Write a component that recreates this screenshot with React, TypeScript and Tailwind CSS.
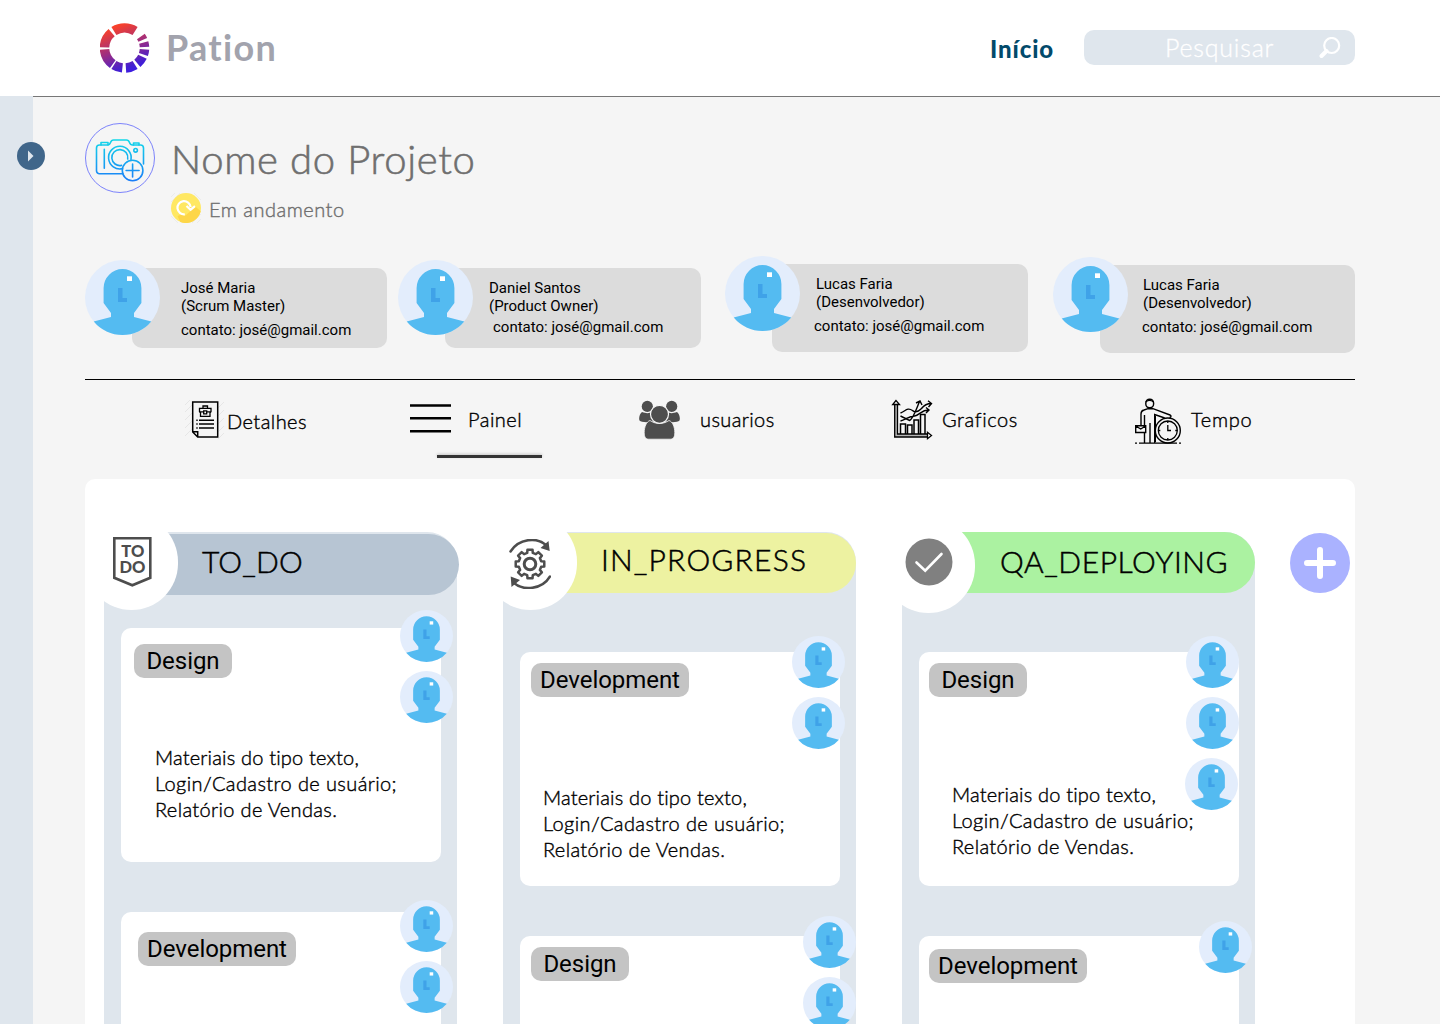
import React from "react";

const SANS = "font-['Lato',sans-serif]";
const ROBOTO = "font-['Roboto',sans-serif]";

function Avatar({ className }: { className: string }) {
  return (
    <svg viewBox="0 0 75 75" preserveAspectRatio="none" className={className}>
      <circle cx="37.5" cy="37.5" r="37.5" fill="#e3edfc" />
      <path
        d="M18.6 28a18.9 18.9 0 0 1 37.8 0V43L49 53v4l17.3 4.5a37.5 37.5 0 0 1-57.6 0L26 57v-4l-7.400-10z"
        fill="#54bbf1"
      />
      <path d="M33 28h4.500v10H42v4h-9z" fill="#3fa2e8" />
      <rect x="42" y="16.300" width="5" height="4.700" fill="#fff" />
    </svg>
  );
}

const ringSegments: [number, number][] = [
  [-122, -58], [182, 230], [126, 176], [96, 122], [58, 86], [26, 50], [4, 19], [-16, -3], [-35, -24],
];

function Logo() {
  const r = 20;
  const point = (deg: number) => {
    const a = (deg * Math.PI) / 180;
    return `${(24.5 + r * Math.cos(a)).toFixed(2)} ${(25 + r * Math.sin(a)).toFixed(2)}`;
  };
  return (
    <svg viewBox="0 0 50 50" className="ml-px size-[50px]">
      <defs>
        <linearGradient id="ring" gradientUnits="userSpaceOnUse" x1="14" y1="4" x2="31" y2="48">
          <stop offset="0" stopColor="#f8412b" />
          <stop offset="0.5" stopColor="#9b2c83" />
          <stop offset="0.9" stopColor="#431fd2" />
          <stop offset="1" stopColor="#3d1de0" />
        </linearGradient>
      </defs>
      {ringSegments.map(([a, b]) => (
        <path key={a} d={`M${point(a)}A${r} ${r} 0 0 1 ${point(b)}`} fill="none" stroke="url(#ring)" strokeWidth="9.500" />
      ))}
    </svg>
  );
}

function Camera() {
  return (
    <svg viewBox="0 0 70 70" className="size-[70px] shrink-0" fill="none">
      <defs>
        <linearGradient id="cam" gradientUnits="userSpaceOnUse" x1="35" y1="15" x2="35" y2="58">
          <stop offset="0" stopColor="#12dbe8" />
          <stop offset="1" stopColor="#1a7df8" />
        </linearGradient>
      </defs>
      <circle cx="35" cy="35" r="34.500" stroke="#7c83fb" />
      <g stroke="url(#cam)" strokeWidth="1.600" strokeLinejoin="round" strokeLinecap="round">
        <path d="M38 50.700H14.500a3 3 0 0 1-3-3V25a3 3 0 0 1 3-3h8c2 0 2.500-1 3-2.500.600-1.700 1-2.500 3-2.500h13c2 0 2.500 1 3 2.500s1 2.500 3 2.500h8a3 3 0 0 1 3 3v16" />
        <path d="M16 22v-2.500h7V22M48.500 22v-2h5.500v2M19.300 26.300v19" />
        <circle cx="50.600" cy="27.300" r="1.800" />
        <path d="M37.500 45.600A11.300 11.300 0 1 1 46 36.500" />
        <path d="M36.500 42.400A8 8 0 1 1 42.700 36" />
        <circle cx="47.600" cy="47.500" r="10.300" />
        <path d="M47.600 41v13M41.100 47.500h13" />
      </g>
    </svg>
  );
}

function Status() {
  return (
    <svg viewBox="0 0 30 30" className="size-[30px]">
      <path d="M0 4 4 0M0 9 9 0M21 30l9-9M26 30l4-4M0 23l7 7M23 0l7 7" stroke="#e9e9e9" strokeWidth=".8" />
      <circle cx="15" cy="15" r="15" fill="#ffe863" />
      <path d="m19 18.500 5-5.300 5.700 5A15 15 0 0 1 9.300 28.900L6.500 23l4-1.500 4 1z" fill="#fdd648" />
      <path d="M13.800 21.300A6.600 6.600 0 1 1 19.600 14" fill="none" stroke="#fff" strokeWidth="2.200" />
      <path d="m15.500 13 4.100 3.700 4.400-3.500" fill="none" stroke="#fff" strokeWidth="2.200" />
    </svg>
  );
}

function DetailsIcon() {
  return (
    <svg viewBox="0 0 40 40" className="h-10 w-10" fill="none" stroke="#000">
      <path d="M1 5l5-5M1 12l8-8M1 20l8-8M1 28l8-8M1 36l8-8M34 8l6-6M34 16l6-6M34 24l6-6M34 32l6-6M34 39l6-6" stroke="#e6e6e6" />
      <path d="M8.700 2h25v35h-20l-5-5zM9 31.800h4.700v5" fill="#f5f5f5" strokeWidth="1.500" />
      <path d="M15.500 8.300H27v3.500l-1 1v3.500h-9.500v-3.500l-1-1zM19 8.300V6h4.500v2.300M15.500 11.800h4M23 11.800h4M19.700 10.800h3v3h-3z" strokeWidth="1.300" />
      <path d="M15 20.300h15M15 24h15M15 28h15M12.300 20.300h1.400M12.300 24h1.400M12.300 28h1.400" strokeWidth="1.400" />
    </svg>
  );
}

function UsersIcon() {
  return (
    <svg viewBox="0 0 41 40" className="h-10 w-[41px]" fill="#4d4d4d">
      <circle cx="8.300" cy="6.400" r="5.600" />
      <circle cx="32.700" cy="6.400" r="5.600" />
      <path d="M3 12c4 1.500 6 1.300 8.500.6.500 4 2 6.500 4 8.400-3 1.200-13 2-15-.5-1-2 .2-7 2.500-8.500zM38 12c-4 1.500-6 1.300-8.500.6-.5 4-2 6.500-4 8.400 3 1.200 13 2 15-.5 1-2-.2-7-2.500-8.500z" />
      <path
        d="M11 20.500c6 4 13 4 19 0 3.500 1 5.800 6.500 5.800 12 0 4.500-1.500 6.700-4.500 6.700H9.700c-3 0-4.500-2.200-4.500-6.700 0-5.500 2.300-11 5.800-12z"
        stroke="#f5f5f5"
        strokeWidth=".8"
      />
      <circle cx="20.500" cy="14.300" r="9" stroke="#f5f5f5" strokeWidth="1.200" />
    </svg>
  );
}

function ChartIcon() {
  return (
    <svg viewBox="0 0 42 42" className="size-[42px]" fill="none" stroke="#000" strokeWidth="1.300">
      <path d="M3.700 5v33h33v-3H6.500V5" fill="#b5b5b5" />
      <path d="M5 1.500 1.700 5.500h6.800zM36.500 33.300v6.400l4-3.200z" fill="#fff" />
      <path d="M9.500 35V25h5v10M16.500 35v-9h4.500v9M23 35V21h4.500v14M29.500 35V15.500H34V35" strokeWidth="1.500" />
      <path d="M9.500 14c5-2 7-6 12-2.500 3 3 7 0 9-2 3-4 6-5 10-5M37 1.700l3.500 2.800L37.500 8M9.500 22c5-1 8-5 14-5 5-1 7-6 14-6M35 8.500l3 2.500-3 3M9.500 17l9 4.500c4-2 7-12 10-19M25 4l4-2 2 4" strokeWidth="1.400" />
    </svg>
  );
}

function TimeIcon() {
  return (
    <svg viewBox="0 0 46 46" className="size-[46px]" fill="none" stroke="#000" strokeWidth="1.400">
      <path d="M0 45.200h2M4 45.200h38M44 45.200h2" strokeWidth="1.200" />
      <rect x="10.800" y="1.200" width="7.800" height="8.600" rx="3.700" />
      <path d="M10.800 4C13 2 16 2 18.600 4" />
      <path d="M6 27V16c0-2.500 1-3.500 3-4l4-1.300h5l17 6.300c1.500.6 1.300 2.500-.5 2.500M9.500 17v10M9.500 35v10M19.700 45V16.500l10 3.500M15 25v20" />
      <path d="M20.500 18v26" strokeWidth="1" />
      <path d="M.7 27.700h10v6.800H.7zM.7 28l5 3 5-3" />
      <circle cx="32.800" cy="32.500" r="12.500" />
      <circle cx="32.800" cy="32.500" r="9.500" strokeWidth="1.300" />
      <path d="M32.800 27v5.500H36M32.800 23v2M32.800 40v2M23.300 32.500h2M40.300 32.500h2" strokeWidth="1.300" />
    </svg>
  );
}

function TodoIcon() {
  return (
    <svg viewBox="0 0 40 50" className="h-[50px] w-10">
      <path d="M1.300 1.300h36v39.500L19.300 48.300l-18-7.500z" fill="none" stroke="#4d4d4d" strokeWidth="2.600" />
      <g fill="#4d4d4d" fontFamily="Lato" fontWeight="900" fontSize="17">
        <text x="8.300" y="20.300" textLength="23" lengthAdjust="spacingAndGlyphs">TO</text>
        <text x="6.500" y="36" textLength="26" lengthAdjust="spacingAndGlyphs">DO</text>
      </g>
    </svg>
  );
}

const gearPath = (() => {
  const out: string[] = [];
  for (let i = 0; i < 8; i++) {
    for (const [offset, radius] of [[-14, 11.500], [-10, 14.500], [10, 14.500], [14, 11.500]]) {
      const a = ((i * 45 + offset) * Math.PI) / 180;
      out.push(`${(21 + radius * Math.cos(a)).toFixed(2)} ${(25 + radius * Math.sin(a)).toFixed(2)}`);
    }
  }
  return `M${out.join("L")}Z`;
})();

function ProgressIcon() {
  return (
    <svg viewBox="0 0 42 50" className="h-[50px] w-[42px]" fill="none" stroke="#4d4d4d" strokeWidth="2.500">
      <path d={gearPath} strokeLinejoin="round" />
      <circle cx="21" cy="25" r="5.800" strokeWidth="3" />
      <path d="M1.500 12.500C10-1 28-2 37 6M41 37.500C33 51 14 52 5 44" strokeLinecap="round" />
      <path d="m39.500 2 1.200 10-9.200-3zM2.500 48 1.700 37.500l9.300 3.500z" fill="#4d4d4d" stroke="none" />
    </svg>
  );
}

function CheckIcon() {
  return (
    <svg viewBox="0 0 48 48" className="size-12">
      <circle cx="24" cy="24" r="23.500" fill="#808080" />
      <path d="m11.500 24.500 8.700 8.200L36.500 16" fill="none" stroke="#fff" strokeWidth="2.600" strokeLinecap="round" />
    </svg>
  );
}

const members = [
  { name: "José Maria", role: "(Scrum Master)", box: "w-[302px]", card: "mt-2 h-20", text: "pl-[49px] pt-[11px]", contact: "mt-1.5" },
  { name: "Daniel Santos", role: "(Product Owner)", box: "ml-[11px] w-[303px]", card: "mt-2 h-20", text: "pl-11 pt-[11px]", contact: "mt-[3px] ml-1" },
  { name: "Lucas Faria", role: "(Desenvolvedor)", box: "ml-6 -mt-1 w-[303px]", card: "mt-2 h-[88px]", text: "pl-11 pt-[11px]", contact: "mt-1.5 -ml-0.5" },
  { name: "Lucas Faria", role: "(Desenvolvedor)", box: "ml-[25px] -mt-[3px] w-[302px]", card: "mt-2 h-[88px]", text: "pl-[43px] pt-[11px]", contact: "mt-1.5 -ml-px" },
];

const tabs = [
  { label: "Detalhes", icon: <DetailsIcon />, at: "ml-[99px] w-[226px] pt-5", text: "ml-[3px] pt-2 tracking-[0.45px]" },
  {
    label: "Painel",
    icon: (
      <svg viewBox="0 0 41 30" className="mt-1 h-[30px] w-[41px]">
        <path d="M0 1.500h41M0 14.300h41M0 27.300h41" stroke="#000" strokeWidth="2.500" />
      </svg>
    ),
    at: "w-[229px] pt-5",
    text: "ml-[17px] pt-1.5 tracking-[0.5px]",
  },
  { label: "usuarios", icon: <UsersIcon />, at: "w-[252px] pt-5", text: "ml-5 pt-1.5 tracking-[0.4px]" },
  { label: "Graficos", icon: <ChartIcon />, at: "w-[244px] pt-[19px]", text: "ml-[9px] pt-[7px] tracking-[0.6px]" },
  { label: "Tempo", icon: <TimeIcon />, at: "pt-[18px]", text: "ml-2.5 pt-2 tracking-[0.7px]" },
];

type Card = { tag: string; tagAt: string; text?: string; avatars: string[] };
type Column = {
  title: string;
  icon: React.ReactNode;
  column: string;
  pill: string;
  titleClass: string;
  circle: string;
  list: string;
  cards: Card[];
};

const columns: Column[] = [
  {
    title: "TO_DO",
    icon: <TodoIcon />,
    column: "ml-[19px]",
    pill: "mt-0.5 h-[61px] w-[355px] bg-[#b7c5d3]",
    titleClass: "pl-[98px] pt-2 tracking-[0.2px]",
    circle: "-left-[19px] -top-[17px] pl-0.5 pb-0.5",
    list: "mt-[33px]",
    cards: [
      { tag: "Design", tagAt: "ml-[13px] mt-4 w-[98px]", text: "pl-[34px] pt-[66px]", avatars: ["left-[279px] -top-[18px]", "left-[279px] top-[43px]"] },
      { tag: "Development", tagAt: "ml-[17px] mt-5 w-[158px]", avatars: ["left-[279px] -top-3", "left-[279px] top-[49px]"] },
    ],
  },
  {
    title: "IN_PROGRESS",
    icon: <ProgressIcon />,
    column: "ml-[46px]",
    pill: "mt-px h-[60px] w-[353px] bg-[#edf2a1]",
    titleClass: "pl-[98px] pt-[7px] tracking-[1.2px]",
    circle: "-left-[19px] -top-[17px] pr-0.5 pt-0.5",
    list: "mt-[57px]",
    cards: [
      { tag: "Development", tagAt: "ml-[11px] mt-[11px] w-[158px]", text: "pl-[23px] pt-[87px]", avatars: ["left-[272px] -top-4", "left-[272px] top-[45px]"] },
      { tag: "Design", tagAt: "ml-[11px] mt-[11px] w-[98px]", avatars: ["left-[283px] -top-5", "left-[283px] top-[41px]"] },
    ],
  },
  {
    title: "QA_DEPLOYING",
    icon: <CheckIcon />,
    column: "ml-[46px]",
    pill: "h-[61px] w-[353px] bg-[#abf2a1]",
    titleClass: "pl-[98px] pt-2.5 tracking-[0.6px]",
    circle: "-left-5 -top-3.5 pb-[7px]",
    list: "mt-[57px]",
    cards: [
      { tag: "Design", tagAt: "ml-2.5 mt-[11px] w-[98px]", text: "pl-[33px] pt-[84px]", avatars: ["left-[267px] -top-4", "left-[267px] top-[45px]", "left-[266px] top-[106px]"] },
      { tag: "Development", tagAt: "ml-2.5 mt-[13px] w-[158px]", avatars: ["left-[280px] -top-[15px]"] },
    ],
  },
];

function BoardColumn({ data }: { data: Column }) {
  return (
    <section className={`relative h-[600px] w-[353px] shrink-0 rounded-tr-[30px] bg-[#dfe6ed] ${data.column}`}>
      <div className="flex h-[63px] flex-col">
        <h2 className={`shrink-0 rounded-r-[31px] text-[30px] font-light leading-[38px] text-black [-webkit-text-stroke:0.5px_#000] ${data.pill} ${data.titleClass}`}>
          {data.title}
        </h2>
      </div>
      <div className={`absolute flex h-[95px] w-[93px] items-center justify-center rounded-full bg-white ${data.circle}`}>{data.icon}</div>
      <div className={`flex flex-col gap-[50px] pl-[17px] ${data.list}`}>
        {data.cards.map((card) => (
          <article key={card.tag} className="relative flex h-[234px] w-80 flex-col rounded-[10px] bg-white">
            <div className={`flex h-[34px] shrink-0 items-center justify-center rounded-[10px] bg-[#c4c4c4] text-2xl tracking-[-0.05px] text-black ${ROBOTO} ${card.tagAt}`}>
              {card.tag}
            </div>
            {card.text && (
              <p className={`text-[20px] font-light leading-[26px] tracking-[0.4px] text-black [-webkit-text-stroke:0.4px_#000] ${card.text}`}>
                <span className="tracking-[0.18px]">Materiais do tipo texto,</span>
                <br />
                Login/Cadastro de usuário;
                <br />
                <span className="tracking-[0.35px]">Relatório de Vendas.</span>
              </p>
            )}
            {card.avatars.map((at) => (
              <Avatar key={at} className={`absolute h-[52px] w-[53px] ${at}`} />
            ))}
          </article>
        ))}
      </div>
    </section>
  );
}

export default function App() {
  return (
    <div className={`flex h-[1024px] w-[1440px] flex-col overflow-hidden bg-white ${SANS}`}>
      <header className="flex h-24 shrink-0 items-start bg-white pl-[99px] pt-[23px]">
        <Logo />
        <span className="ml-4 w-[110px] text-[36px] font-bold leading-[48px] tracking-[1.300px] text-[#a2a3ad]">Pation</span>
        <a className="ml-[714px] w-[64px] whitespace-nowrap pt-2 text-[24px] font-black leading-9 tracking-[0.900px] text-[#024a6b]">Início</a>
        <div className="ml-[30px] mt-[7px] flex h-[35px] w-[271px] items-center rounded-[10px] bg-[#dfe6ed]">
          <span className="ml-[81px] w-[108px] text-[25px] font-light leading-[35px] tracking-[0.8px] text-white [-webkit-text-stroke:0.3px_#fff]">Pesquisar</span>
          <svg viewBox="0 0 22 22" className="ml-[46px] size-[22px]" fill="none" stroke="#fff">
            <circle cx="12.700" cy="8.500" r="7.500" strokeWidth="2.200" />
            <path d="m7.500 14-5 5" strokeWidth="4" strokeLinecap="round" />
          </svg>
        </div>
      </header>
      <div className="flex flex-1">
        <aside className="relative w-[33px] shrink-0 bg-[#dfe6ed]">
          <button className="absolute left-[17px] top-[46px] flex size-7 items-center justify-center rounded-full bg-[#40668a]">
            <svg viewBox="0 0 6 12" className="h-3 w-1.5">
              <path d="M0 0.500 5.500 6 0 11.500z" fill="#dfe6ed" />
            </svg>
          </button>
        </aside>
        <main className="h-[928px] flex-1 overflow-hidden border-t border-[#777] bg-[#f5f5f5] pl-[52px] pr-[85px]">
          <div className="flex h-[163px] pt-[26px]">
            <Camera />
            <div className="pl-4">
              <h1 className="pt-3 text-[40px] font-light leading-[48px] tracking-[0.65px] text-[#6f6f6f] [-webkit-text-stroke:0.6px_#6f6f6f]">Nome do Projeto</h1>
              <div className="mt-2.5 flex items-center gap-2">
                <Status />
                <span className="pt-0.5 text-[20px] font-light leading-6 tracking-[0.5px] text-[#6f6f6f] [-webkit-text-stroke:0.4px_#6f6f6f]">Em andamento</span>
              </div>
            </div>
          </div>
          <div className={`flex h-[119px] ${ROBOTO}`}>
            {members.map((m, i) => (
              <div key={i} className={`relative shrink-0 pl-[47px] ${m.box}`}>
                <div className={`rounded-[10px] bg-[#dcdcdc] text-[15px] leading-[18px] text-black ${m.card} ${m.text}`}>
                  <p>{m.name}</p>
                  <p>{m.role}</p>
                  <p className={`whitespace-nowrap ${m.contact}`}>contato: josé@gmail.com</p>
                </div>
                <Avatar className="absolute left-0 top-0 size-[75px]" />
              </div>
            ))}
          </div>
          <nav className="relative flex h-[100px] border-t border-black">
            {tabs.map((t) => (
              <a
                key={t.label}
                className={`flex shrink-0 items-start whitespace-nowrap text-[20px] font-light leading-[26px] text-black [-webkit-text-stroke:0.4px_#000] ${t.at}`}
              >
                {t.icon}
                <span className={t.text}>{t.label}</span>
              </a>
            ))}
            <span className="absolute left-[352px] top-[75px] h-[3px] w-[105px] bg-[#333] shadow-[0_-1px_3px_rgba(0,0,0,0.2)]" />
          </nav>
          <div className="flex h-[600px] w-[1270px] rounded-[10px] bg-white pt-[53px]">
            {columns.map((c) => (
              <BoardColumn key={c.title} data={c} />
            ))}
            <button className="ml-[35px] mt-px flex size-[60px] shrink-0 items-center justify-center rounded-full bg-[#aab2ff]">
              <svg viewBox="0 0 32 32" className="size-8">
                <path d="M16 3v26M3 16h26" stroke="#fff" strokeWidth="6" strokeLinecap="round" />
              </svg>
            </button>
          </div>
        </main>
      </div>
    </div>
  );
}
